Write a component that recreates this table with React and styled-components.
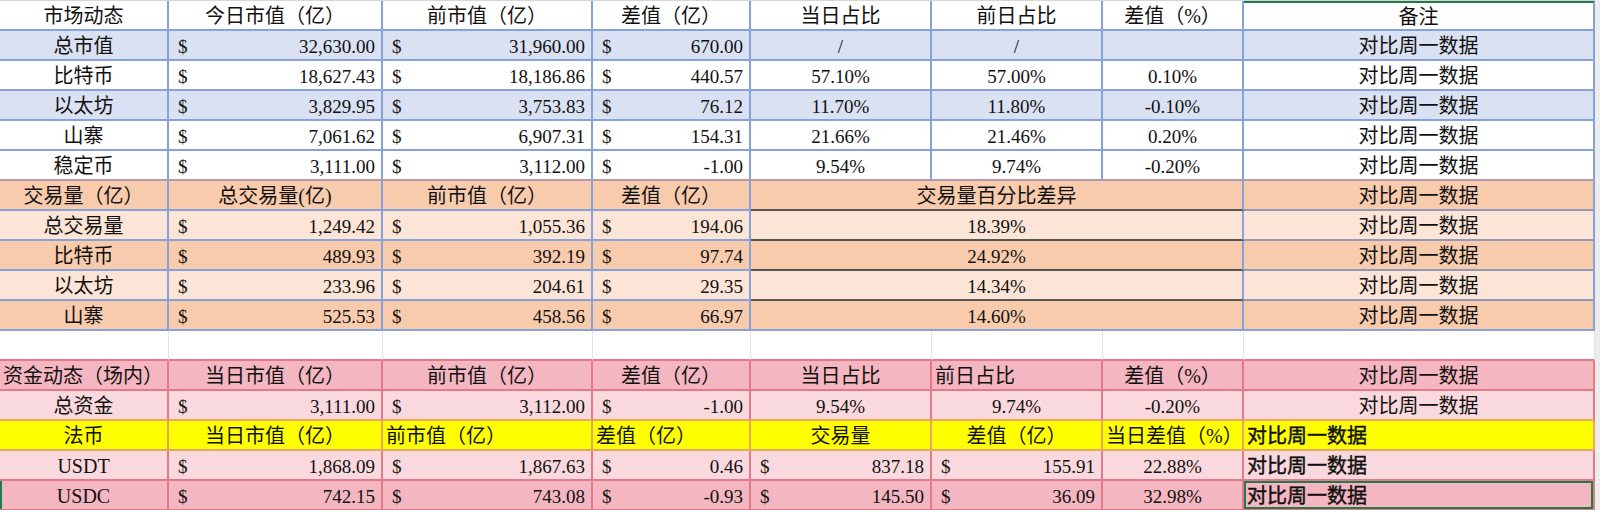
import React from "react";
import styled, { createGlobalStyle } from "styled-components";

const GlobalStyle = createGlobalStyle`
  html, body { margin: 0; padding: 0; background: #ececec; }
  body { font-family: "Liberation Serif", "Noto Sans CJK SC", serif; color: #111; }
`;

const COLS = "169px 214px 210px 158px 181px 171px 141px 351px";

const C = {
  blueBg: "#D9E1F2",
  orangeDark: "#F8CBAD",
  orangeLight: "#FCE4D6",
  pinkDark: "#F4B6C0",
  pinkLight: "#FAD9DE",
  yellow: "#FFFF00",
  blueLine: "#86A2DA",
  redLine: "#E47A89",
  orangeLine: "#E6A760",
  grayGrid: "#E4E4E4",
  darkLine: "#555555",
  slateLine: "#9299B8",
  green: "#1F7A4D",
};

const Sheet = styled.div`
  width: 1595px;
  background: #fff;
  border-top: 1px solid #d6d6d6;
  box-sizing: border-box;
`;

const Row = styled.div`
  display: grid;
  grid-template-columns: ${COLS};
  grid-template-rows: ${(p) => p.$h || 30}px;
  height: ${(p) => p.$h || 30}px;
`;

const justify = { left: "flex-start", center: "center", right: "flex-end", split: "space-between" };

const Cell = styled.div`
  grid-column: span ${(p) => p.$span || 1};
  box-sizing: border-box;
  height: 100%;
  line-height: 1;
  overflow: visible;
  background: ${(p) => p.$bg || "#fff"};
  border-right: ${(p) => (p.$thin ? 1 : 2)}px solid ${(p) => p.$v || C.blueLine};
  border-bottom: 2px solid ${(p) => p.$hl || C.blueLine};
  border-top: ${(p) => (p.$top ? `2px solid ${p.$top}` : "none")};
  display: flex;
  align-items: center;
  justify-content: ${(p) => justify[p.$align || "center"]};
  padding: ${(p) => (p.$align === "split" ? "2px 6px 0 9px" : p.$align === "left" ? "2px 0 0 3px" : "2px 0 0 0")};
  font-size: ${(p) => (p.$num ? 19 : 20)}px;
  -webkit-text-stroke: ${(p) => (p.$bold ? "0.45px #111" : "0")};
  white-space: nowrap;
  min-width: 0;
  box-shadow: ${(p) => (p.$sel ? `inset 0 0 0 2px ${C.green}` : "none")};
  position: relative;
`;

const LeftMark = styled.span`
  position: absolute;
  left: 0;
  top: 0;
  bottom: 0;
  width: 2px;
  background: ${C.green};
`;

const Dollar = styled.span``;
const Amount = styled.span``;

const Money = ({ v, ...rest }) => (
  <Cell $align="split" $num {...rest}>
    <Dollar>$</Dollar>
    <Amount>{v}</Amount>
  </Cell>
);

const NOTE = "对比周一数据";

const sec1 = [
  { label: "总市值", bg: C.blueBg, m: ["32,630.00", "31,960.00", "670.00"], p: ["/", "/", ""] },
  { label: "比特币", bg: "#fff", m: ["18,627.43", "18,186.86", "440.57"], p: ["57.10%", "57.00%", "0.10%"] },
  { label: "以太坊", bg: C.blueBg, m: ["3,829.95", "3,753.83", "76.12"], p: ["11.70%", "11.80%", "-0.10%"] },
  { label: "山寨", bg: "#fff", m: ["7,061.62", "6,907.31", "154.31"], p: ["21.66%", "21.46%", "0.20%"] },
  { label: "稳定币", bg: "#fff", m: ["3,111.00", "3,112.00", "-1.00"], p: ["9.54%", "9.74%", "-0.20%"] },
];

const sec2 = [
  { label: "总交易量", bg: C.orangeLight, m: ["1,249.42", "1,055.36", "194.06"], p: "18.39%" },
  { label: "比特币", bg: C.orangeDark, m: ["489.93", "392.19", "97.74"], p: "24.92%" },
  { label: "以太坊", bg: C.orangeLight, m: ["233.96", "204.61", "29.35"], p: "14.34%" },
  { label: "山寨", bg: C.orangeDark, m: ["525.53", "458.56", "66.97"], p: "14.60%" },
];

const fiat = [
  { label: "USDT", bg: C.pinkLight, m: ["1,868.09", "1,867.63", "0.46", "837.18", "155.91"], p: "22.88%" },
  { label: "USDC", bg: C.pinkDark, m: ["742.15", "743.08", "-0.93", "145.50", "36.09"], p: "32.98%", sel: true },
];

export default function App() {
  return (
    <>
      <GlobalStyle />
      <Sheet>
        {/* 市场动态 header */}
        <Row $h={30}>
          {["市场动态", "今日市值（亿）", "前市值（亿）", "差值（亿）", "当日占比", "前日占比", "差值（%）"].map((t) => (
            <Cell key={t}>{t}</Cell>
          ))}
          <Cell $top={C.green}>备注</Cell>
        </Row>
        {sec1.map((r, i) => {
          const hl = i === sec1.length - 1 ? "#B59AAE" : C.blueLine;
          return (
            <Row key={r.label + i}>
              <Cell $bg={r.bg} $hl={hl}>{r.label}</Cell>
              {r.m.map((v, j) => (
                <Money key={j} v={v} $bg={r.bg} $hl={hl} />
              ))}
              {r.p.map((v, j) => (
                <Cell key={"p" + j} $num $bg={r.bg} $hl={hl}>{v}</Cell>
              ))}
              <Cell $bg={r.bg} $hl={hl}>{NOTE}</Cell>
            </Row>
          );
        })}

        {/* 交易量 */}
        <Row>
          {["交易量（亿）", "总交易量(亿)", "前市值（亿）", "差值（亿）"].map((t) => (
            <Cell key={t} $bg={C.orangeDark}>{t}</Cell>
          ))}
          <Cell $span={3} $bg={C.orangeDark} $hl={C.darkLine}>交易量百分比差异</Cell>
          <Cell $bg={C.orangeDark} $hl={C.slateLine}>{NOTE}</Cell>
        </Row>
        {sec2.map((r, i) => {
          const last = i === sec2.length - 1;
          return (
            <Row key={r.label + i}>
              <Cell $bg={r.bg}>{r.label}</Cell>
              {r.m.map((v, j) => (
                <Money key={j} v={v} $bg={r.bg} />
              ))}
              <Cell $span={3} $num $bg={r.bg} $hl={last ? C.blueLine : C.darkLine}>{r.p}</Cell>
              <Cell $bg={r.bg} $hl={last ? C.blueLine : C.slateLine}>{NOTE}</Cell>
            </Row>
          );
        })}

        {/* blank spacer row */}
        <Row>
          {Array.from({ length: 8 }).map((_, i) => (
            <Cell key={i} $thin $v={C.grayGrid} $hl={C.redLine} />
          ))}
        </Row>

        {/* 资金动态 */}
        <Row>
          <Cell $align="left" $bg={C.pinkDark} $v={C.redLine} $hl={C.redLine}>资金动态（场内）</Cell>
          {["当日市值（亿）", "前市值（亿）", "差值（亿）", "当日占比"].map((t) => (
            <Cell key={t} $bg={C.pinkDark} $v={C.redLine} $hl={C.redLine}>{t}</Cell>
          ))}
          <Cell $align="left" $bg={C.pinkDark} $v={C.redLine} $hl={C.redLine}>前日占比</Cell>
          <Cell $bg={C.pinkDark} $v={C.redLine} $hl={C.redLine}>差值（%）</Cell>
          <Cell $bg={C.pinkDark} $v={C.redLine} $hl={C.redLine}>{NOTE}</Cell>
        </Row>
        <Row>
          <Cell $bg={C.pinkLight} $v={C.redLine} $hl={C.orangeLine}>总资金</Cell>
          {["3,111.00", "3,112.00", "-1.00"].map((v, j) => (
            <Money key={j} v={v} $bg={C.pinkLight} $v={C.redLine} $hl={C.orangeLine} />
          ))}
          {["9.54%", "9.74%", "-0.20%"].map((v, j) => (
            <Cell key={j} $num $bg={C.pinkLight} $v={C.redLine} $hl={C.orangeLine}>{v}</Cell>
          ))}
          <Cell $bg={C.pinkLight} $v={C.redLine} $hl={C.orangeLine}>{NOTE}</Cell>
        </Row>

        {/* 法币 */}
        <Row>
          <Cell $bg={C.yellow} $v={C.orangeLine} $hl={C.orangeLine}>法币</Cell>
          <Cell $bg={C.yellow} $v={C.orangeLine} $hl={C.orangeLine}>当日市值（亿）</Cell>
          <Cell $align="left" $bg={C.yellow} $v={C.orangeLine} $hl={C.orangeLine}>前市值（亿）</Cell>
          <Cell $align="left" $bg={C.yellow} $v={C.orangeLine} $hl={C.orangeLine}>差值（亿）</Cell>
          <Cell $bg={C.yellow} $v={C.orangeLine} $hl={C.orangeLine}>交易量</Cell>
          <Cell $bg={C.yellow} $v={C.orangeLine} $hl={C.orangeLine}>差值（亿）</Cell>
          <Cell $align="left" $bg={C.yellow} $v={C.orangeLine} $hl={C.orangeLine}>当日差值（%）</Cell>
          <Cell $align="left" $bold $bg={C.yellow} $v={C.orangeLine} $hl={C.orangeLine}>{NOTE}</Cell>
        </Row>
        {fiat.map((r) => (
          <Row key={r.label}>
            <Cell $bg={r.bg} $v={C.redLine} $hl={C.redLine}>
              {r.sel && <LeftMark />}
              {r.label}
            </Cell>
            {r.m.map((v, j) => (
              <Money key={j} v={v} $bg={r.bg} $v={C.redLine} $hl={C.redLine} />
            ))}
            <Cell $num $bg={r.bg} $v={C.redLine} $hl={C.redLine}>{r.p}</Cell>
            <Cell $align="left" $bold $sel={r.sel} $bg={r.bg} $v={C.redLine} $hl={C.redLine}>
              {NOTE}
            </Cell>
          </Row>
        ))}
      </Sheet>
    </>
  );
}
